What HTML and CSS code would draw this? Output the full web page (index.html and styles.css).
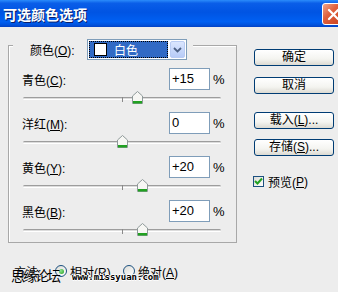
FILE: index.html
```html
<!DOCTYPE html>
<html>
<head>
  <title>可选颜色选项</title>
  <link rel="stylesheet" href="styles.css">
</head>
<body>
  <div class="titlebar">
    <span class="title">可选颜色选项</span>
    <span class="close-btn">
      <svg width="19" height="19" viewBox="0 0 19 19"><path d="M5 5 L14 14 M14 5 L5 14" stroke="#fff" stroke-width="2.2" stroke-linecap="round"/></svg>
    </span>
  </div>

  <div class="dialog">
    <div class="main">
      <div class="group">
        <div class="group-head">
          <span class="head-label">颜色(<u>O</u>):</span>
          <div class="combo">
            <div class="combo-value">
              <span class="swatch"></span>
              <span class="combo-text">白色</span>
            </div>
            <span class="combo-arrow">
              <svg width="9" height="6" viewBox="0 0 9 6"><path d="M1 1 L4.5 4.5 L8 1" fill="none" stroke="#4d6185" stroke-width="1.8"/></svg>
            </span>
          </div>
        </div>

        <div class="adjust">
          <div class="row">
            <span class="row-label">青色(<u>C</u>):</span>
            <div class="num">+15</div>
            <span class="pct">%</span>
          </div>
          <div class="slider">
            <div class="track">
              <span class="thumb" style="left: 57.5%"><svg width="11" height="13" viewBox="0 0 11 13"><path d="M0.5 5 L5.5 0.5 L10.5 5 L10.5 12.5 L0.5 12.5 Z" fill="#f7f7f4" stroke="#8f9a9a"/><rect x="1" y="10" width="9" height="2.5" fill="#21a121"/></svg></span>
            </div>
          </div>
        </div>

        <div class="adjust">
          <div class="row">
            <span class="row-label">洋红(<u>M</u>):</span>
            <div class="num">0</div>
            <span class="pct">%</span>
          </div>
          <div class="slider">
            <div class="track">
              <span class="thumb" style="left: 50%"><svg width="11" height="13" viewBox="0 0 11 13"><path d="M0.5 5 L5.5 0.5 L10.5 5 L10.5 12.5 L0.5 12.5 Z" fill="#f7f7f4" stroke="#8f9a9a"/><rect x="1" y="10" width="9" height="2.5" fill="#21a121"/></svg></span>
            </div>
          </div>
        </div>

        <div class="adjust">
          <div class="row">
            <span class="row-label">黄色(<u>Y</u>):</span>
            <div class="num">+20</div>
            <span class="pct">%</span>
          </div>
          <div class="slider">
            <div class="track">
              <span class="thumb" style="left: 60%"><svg width="11" height="13" viewBox="0 0 11 13"><path d="M0.5 5 L5.5 0.5 L10.5 5 L10.5 12.5 L0.5 12.5 Z" fill="#f7f7f4" stroke="#8f9a9a"/><rect x="1" y="10" width="9" height="2.5" fill="#21a121"/></svg></span>
            </div>
          </div>
        </div>

        <div class="adjust">
          <div class="row">
            <span class="row-label">黑色(<u>B</u>):</span>
            <div class="num">+20</div>
            <span class="pct">%</span>
          </div>
          <div class="slider">
            <div class="track">
              <span class="thumb" style="left: 60%"><svg width="11" height="13" viewBox="0 0 11 13"><path d="M0.5 5 L5.5 0.5 L10.5 5 L10.5 12.5 L0.5 12.5 Z" fill="#f7f7f4" stroke="#8f9a9a"/><rect x="1" y="10" width="9" height="2.5" fill="#21a121"/></svg></span>
            </div>
          </div>
        </div>
      </div>

      <div class="side">
        <button class="btn btn-ok">确定</button>
        <button class="btn btn-cancel">取消</button>
        <button class="btn btn-load">载入(<u>L</u>)...</button>
        <button class="btn btn-save">存储(<u>S</u>)...</button>
        <label class="check">
          <span class="checkbox">
            <svg width="9" height="9" viewBox="0 0 9 9"><path d="M1 4 L3.5 6.5 L8 1.5" fill="none" stroke="#21a121" stroke-width="2"/></svg>
          </span>
          预览(<u>P</u>)
        </label>
      </div>
    </div>

    <div class="method">
      <span class="method-label">方法:</span>
      <span class="radio checked"></span>
      <span class="radio-text">相对(<u>R</u>)</span>
      <span class="radio"></span>
      <span class="radio-text">绝对(<u>A</u>)</span>
      <div class="watermark">
        <span class="wm-name">思缘论坛</span>
        <span class="wm-url">www.missyuan.com</span>
      </div>
    </div>
  </div>
</body>
</html>
```

FILE: styles.css
```css
body {
  margin: 0;
  width: 338px;
  height: 292px;
  overflow: hidden;
  background-color: #ededed;
  font-family: "Liberation Sans", "Noto Sans CJK SC", sans-serif;
  font-size: 12px;
  color: #000;
}
u {
  text-decoration: underline;
}
.titlebar {
  height: 27px;
  display: flex;
  align-items: center;
  justify-content: space-between;
  padding-left: 3px;
  background: linear-gradient(#2b8cfb 0, #0a5ee8 12%, #0054e3 45%, #0060f2 80%, #0052dd 92%, #0341c4 100%);
}
.title {
  color: #fff;
  font-family: "Noto Sans CJK SC", sans-serif;
  font-weight: bold;
  font-size: 14px;
  text-shadow: 1px 1px 0 #0a1e6a;
}
.close-btn {
  width: 20px;
  height: 20px;
  margin-right: -6px;
  margin-top: 1px;
  border: 1px solid #fff;
  border-radius: 3px;
  background: linear-gradient(135deg, #f0a58a 0, #e0603c 40%, #c8401e 100%);
  display: flex;
  align-items: center;
  justify-content: center;
}
.dialog {
  position: relative;
}
.main {
  display: flex;
  padding: 18px 0 0 8px;
}
.group {
  width: 229px;
  height: 198px;
  box-sizing: border-box;
  border: 1px solid #a8a8a8;
  box-shadow: inset 1px 1px 0 #fff;
}
.group-head {
  display: flex;
  align-items: center;
  width: fit-content;
  height: 21px;
  margin: -7px 0 0 4px;
  padding: 0 6px 0 17px;
  background-color: #ededed;
}
.head-label {
  width: 57px;
}
.combo {
  display: flex;
  align-items: center;
  width: 100px;
  height: 21px;
  box-sizing: border-box;
  border: 1px solid #7f9db9;
  background-color: #fff;
  padding: 1px;
}
.combo-value {
  flex: 1;
  height: 17px;
  display: flex;
  align-items: center;
  background-color: #316ac5;
  outline: 1px dotted #000;
  outline-offset: -1px;
  padding-left: 5px;
}
.swatch {
  width: 13px;
  height: 13px;
  box-sizing: border-box;
  border: 1px solid #000;
  background-color: #fff;
}
.combo-text {
  color: #fff;
  margin-left: 7px;
  font-family: "Noto Sans CJK SC", sans-serif;
}
.combo-arrow {
  width: 15px;
  height: 17px;
  margin-left: 2px;
  box-sizing: border-box;
  border: 1px solid #b9cbf3;
  border-radius: 2px;
  background: linear-gradient(#dbe6fe, #b7cbf7);
  display: flex;
  align-items: center;
  justify-content: center;
}
.adjust {
  height: 44px;
}
.group-head + .adjust {
  margin-top: 8px;
}
.row {
  display: flex;
  align-items: center;
  height: 22px;
  padding: 0 2px 0 13px;
}
.row-label {
  flex: 1;
}
.num {
  width: 41px;
  height: 22px;
  box-sizing: border-box;
  border: 1px solid #7f9db9;
  background-color: #fff;
  font-size: 13px;
  line-height: 20px;
  padding-left: 2px;
}
.pct {
  width: 24px;
  box-sizing: border-box;
  padding-left: 3px;
  font-size: 13px;
}
.slider {
  height: 22px;
  box-sizing: border-box;
  padding: 7px 0 0 14px;
}
.track {
  position: relative;
  width: 198px;
  height: 3px;
  box-sizing: border-box;
  border-top: 1px solid #9d9d9d;
  border-bottom: 1px solid #fff;
  background-color: #dcdcdc;
  border-radius: 2px;
}
.track::after {
  content: "";
  position: absolute;
  left: 50%;
  top: -1px;
  width: 1px;
  height: 5px;
  background-color: #8a8a8a;
}
.thumb {
  position: absolute;
  top: -7px;
  margin-left: -5px;
  width: 11px;
  height: 13px;
  z-index: 1;
}
.thumb svg {
  display: block;
}
.side {
  display: flex;
  flex-direction: column;
  margin-left: 17px;
  width: 80px;
  padding-top: 4px;
}
.btn {
  height: 17px;
  padding: 0;
  border: 1px solid #003c74;
  border-radius: 3px;
  background: linear-gradient(#ffffff 0, #f4f4f0 60%, #dcdad2 100%);
  font-family: "Liberation Sans", "Noto Sans CJK SC", sans-serif;
  font-size: 12px;
  line-height: 15px;
  color: #000;
}
.btn-cancel {
  margin-top: 11px;
}
.btn-load {
  margin-top: 18px;
}
.btn-save {
  margin-top: 10px;
}
.check {
  display: flex;
  align-items: center;
  margin-top: 17px;
  margin-left: -1px;
}
.checkbox {
  width: 11px;
  height: 11px;
  box-sizing: border-box;
  border: 1px solid #1c5180;
  background: linear-gradient(135deg, #dcdcd7, #fff);
  display: flex;
  align-items: center;
  justify-content: center;
  margin-right: 4px;
}
.method {
  position: relative;
  display: flex;
  align-items: center;
  height: 14px;
  margin-top: 21px;
  padding-left: 14px;
}
.method-label {
  width: 41px;
}
.radio {
  width: 12px;
  height: 12px;
  box-sizing: border-box;
  border: 1px solid #1c5180;
  border-radius: 50%;
  background: linear-gradient(135deg, #dcdcd7, #fff);
  display: flex;
  align-items: center;
  justify-content: center;
}
.radio.checked::after {
  content: "";
  width: 5px;
  height: 5px;
  border-radius: 50%;
  background: radial-gradient(circle at 35% 35%, #8fe28f, #21a121);
}
.radio-text {
  margin-left: 3px;
  width: 53px;
}
.watermark {
  position: absolute;
  left: 11px;
  top: 4px;
  display: flex;
  align-items: flex-end;
}
.wm-name {
  font-family: "Noto Sans CJK SC", sans-serif;
  font-size: 14px;
  letter-spacing: -2px;
  line-height: 15px;
  color: #000;
  text-shadow: 0 0 1px #fff;
}
.wm-url {
  margin-left: 13px;
  margin-bottom: 1px;
  font-family: "DejaVu Sans Mono", monospace;
  font-size: 9px;
  line-height: 9px;
  font-weight: bold;
  color: #000;
  text-shadow: 1px 0 0 #fff, -1px 0 0 #fff, 0 1px 0 #fff, 0 -1px 0 #fff;
}
```
